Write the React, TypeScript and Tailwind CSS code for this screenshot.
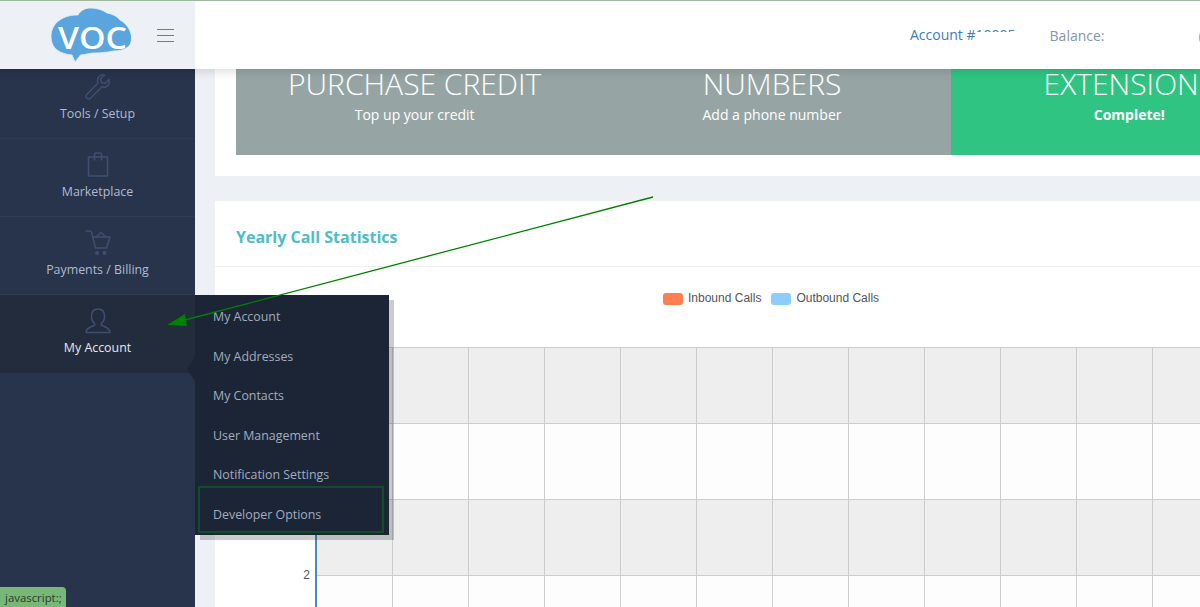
import React from "react";

const font = { fontFamily: '"Open Sans", "Noto Sans", sans-serif' };

const NavIcon = ({ kind }: { kind: string }) => {
  const p = { fill: "none", stroke: "#3f4f72", strokeWidth: 1.5, strokeLinecap: "round" as const, strokeLinejoin: "round" as const };
  return (
    <svg width="26" height="26" viewBox="0 0 26 26" className="block">
      {kind === "tools" && (
        <path {...p} d="M24 5.5 L20 9.5 L16.5 8.5 L15.5 5 L19.5 1 C16 0 12.5 2.5 12.5 6.5 C12.5 7.5 12.7 8.3 13 9 L1.8 20.5 C0.5 22 1 23.5 2 24.3 C3 25.2 4.5 25.3 5.8 24 L17 12.8 C18 13.2 19 13.3 20 13.2 C23 12.8 25 9.5 24 5.5 Z" />
      )}
      {kind === "bag" && (
        <g {...p}>
          <rect x="3.5" y="5" width="19" height="19" />
          <path d="M9.5 8 V2.5 C9.5 1.5 10.3 1 11 1 H15 C15.7 1 16.5 1.5 16.5 2.5 V8" />
        </g>
      )}
      {kind === "cart" && (
        <g {...p}>
          <path d="M1 1 H5 C6 1 6.3 1.6 6.6 2.5 L10.5 18 H21.5 L25 7 H7.6" />
          <path d="M11 7 L16 2.5 L21 7" />
          <circle cx="12" cy="23" r="1.2" fill="#3f4f72" />
          <circle cx="19.5" cy="23" r="1.2" fill="#3f4f72" />
        </g>
      )}
      {kind === "user" && (
        <path {...p} d="M13 1 C8.5 1 6.5 4.5 6.5 8.5 C6.5 11.5 7.8 14 9.6 15.4 V17.2 C7 18.8 1 19.5 1 24.5 H25 C25 19.5 19 18.8 16.4 17.2 V15.4 C18.2 14 19.5 11.5 19.5 8.5 C19.5 4.5 17.5 1 13 1 Z" />
      )}
    </svg>
  );
};

const NavItem = ({ kind, label, active }: { kind: string; label: string; active?: boolean }) => (
  <div
    className={`h-[78px] flex flex-col items-center pt-[13px] border-b text-[12.4px] leading-[18px] ${
      active ? "bg-[#222c3d] border-[#222c3d] text-[#e3e8f0]" : "border-[#2f3b54] text-[#aebbd0]"
    }`}
  >
    <NavIcon kind={kind} />
    <div className="mt-[5px]">{label}</div>
  </div>
);

const menu = ["My Account", "My Addresses", "My Contacts", "User Management", "Notification Settings", "Developer Options"];

const Stat = ({ title, sub, bold }: { title: string; sub: string; bold?: boolean }) => (
  <div className="w-[357.33px] shrink-0 text-center text-white">
    <div className="text-[30px] leading-[30px] font-light whitespace-nowrap">{title}</div>
    <div className={`text-[14px] leading-[20px] mt-[6px] ${bold ? "font-bold" : ""}`}>{sub}</div>
  </div>
);

export default function App() {
  return (
    <div className="relative w-[1200px] h-[607px] overflow-hidden bg-[#edf0f5] flex flex-col" style={font}>
      <header className="relative z-20 h-[69px] shrink-0 flex bg-white border-t border-[#9fb89f] shadow-[0_2px_10px_rgba(0,0,0,0.15)]">
        <div className="w-[195px] shrink-0 bg-[#edf0f5] relative flex items-center">
          <svg width="82" height="56" viewBox="0 0 82 56" className="ml-[50px]">
            <path
              fill="#5aa5dd"
              stroke="#e4f0f9"
              strokeWidth="0.8"
              d="M1 29 C1 22 5 15 13 11 C18 8.5 23 8 28 8 C30 4 35 1 40 1 C47 1 53 3 57 6 C63 7 67 9.5 70 13 C76 16 81 23 81.5 30 C81.5 35 80.5 38 78 40 C74 43 69 44 63 44 C57 45.5 50 46 43 46 L30.5 48 L25 55 L22 48 C16 47.5 11 46 7 43 C3 40 1 35 1 29 Z"
            />
            <text x="42.5" y="42" textAnchor="middle" fill="#fff" fontSize="30" fontWeight="600" textLength="69" lengthAdjust="spacingAndGlyphs" style={{ fontFamily: '"Open Sans", sans-serif' }}>
              VOC
            </text>
          </svg>
          <div className="w-[17px] flex flex-col gap-[5px] absolute left-[157px]">
            <div className="h-px bg-[#6d7a91]" />
            <div className="h-px bg-[#6d7a91]" />
            <div className="h-px bg-[#6d7a91]" />
          </div>
        </div>
        <div className="flex-1 flex items-center text-[14px] whitespace-nowrap">
          <div className="ml-[715px] flex items-center text-[#3e7cb8] leading-[20px]">
            <span>Account #</span>
            <span className="inline-block h-[7px] overflow-hidden self-start">10005</span>
          </div>
          <div className="ml-[34px] text-[#8396ae]">Balance:</div>
          <div className="ml-[94px] text-[#5aa5dd]">(</div>
        </div>
      </header>

      <div className="flex flex-1 min-h-0">
        <aside className="w-[195px] shrink-0 bg-[#28344b] overflow-hidden">
          <div className="-mt-[8px]">
            <NavItem kind="tools" label="Tools / Setup" />
            <NavItem kind="bag" label="Marketplace" />
            <NavItem kind="cart" label="Payments / Billing" />
            <NavItem kind="user" label="My Account" active />
          </div>
        </aside>

        <main className="flex-1 min-w-0 pl-[20px] overflow-hidden">
          <section className="w-[1100px] h-[107px] bg-white px-[21px]">
            <div className="h-[86px] flex bg-[#96a5a4]">
              <Stat title="PURCHASE CREDIT" sub="Top up your credit" />
              <Stat title="NUMBERS" sub="Add a phone number" />
              <div className="w-[400px] shrink-0 bg-[#2fc482]">
                <Stat title="EXTENSIONS" sub="Complete!" bold />
              </div>
            </div>
          </section>

          <section className="w-[1100px] mt-[25px] bg-white h-[500px]">
            <div className="h-[66px] flex items-center px-[21px] pt-[6px] border-b border-[#eeeeee] text-[16px] font-bold text-[#4cbdc9]">
              Yearly Call Statistics
            </div>
            <div className="h-[80px] relative flex justify-center">
              <div className="absolute left-[448px] top-[25px] flex items-center text-[12px] leading-[14px] text-[#555555]" style={{ fontFamily: '"Liberation Sans", Arial, sans-serif' }}>
                <span className="w-[20px] h-[12px] rounded-[3px] bg-[#ff7f50]" />
                <span className="ml-[5px] -mt-[1px]">Inbound Calls</span>
                <span className="ml-[10px] w-[20px] h-[12px] rounded-[3px] bg-[#8ecdfb]" />
                <span className="ml-[5px] -mt-[1px]">Outbound Calls</span>
              </div>
            </div>
            <div className="flex">
              <div className="w-[100px] shrink-0 relative text-[12px] text-[#555555]" style={{ fontFamily: '"Liberation Sans", Arial, sans-serif' }}>
                <div className="absolute right-[5px] top-[221px] leading-[14px]">2</div>
              </div>
              <div className="flex-1 grid grid-cols-[repeat(12,76px)] border-l-2 border-[#4a8ac0]">
                {Array.from({ length: 48 }).map((_, i) => {
                  const row = Math.floor(i / 12);
                  return (
                    <div
                      key={i}
                      className={`h-[76px] border-t border-r border-[#cccccc] ${row % 2 === 0 ? "bg-[#eeeeee]" : "bg-[#fdfdfd]"}`}
                    />
                  );
                })}
              </div>
            </div>
          </section>
        </main>
      </div>

      {/* Flyout menu, lying over the sidebar and the chart */}
      <div className="absolute z-30 left-[195px] top-[295px] w-[194px] h-[240px] bg-[#1c2536] shadow-[5px_5px_0_rgba(0,0,0,0.2)] pt-[2px] pl-[18px] text-[12.4px] text-[#a3acbc]">
        <div className="absolute -left-[8px] top-[62px] w-0 h-0 border-y-[12px] border-y-transparent border-r-[8px] border-r-[#1c2536]" />
        {menu.map((m) => (
          <div key={m} className="h-[39.5px] leading-[39.5px]">{m}</div>
        ))}
        <div className="absolute left-[3px] top-[191px] w-[186px] h-[47px] border-2 border-[#104d28]" />
      </div>

      {/* Annotation arrow drawn on top of the screenshot */}
      <svg className="absolute z-40 left-0 top-0 pointer-events-none" width="1200" height="607">
        <line x1="653" y1="197" x2="185" y2="320" stroke="#008000" strokeWidth="1.3" />
        <polygon points="167,325 185,314 187,326" fill="#008000" />
      </svg>

      <div className="absolute z-40 left-0 bottom-0 h-[20px] w-[66px] bg-[#77b877] rounded-tr-[4px] text-[11.4px] leading-[22px] pl-[5px] text-[#2c3a2c]">
        javascript:;
      </div>
    </div>
  );
}
